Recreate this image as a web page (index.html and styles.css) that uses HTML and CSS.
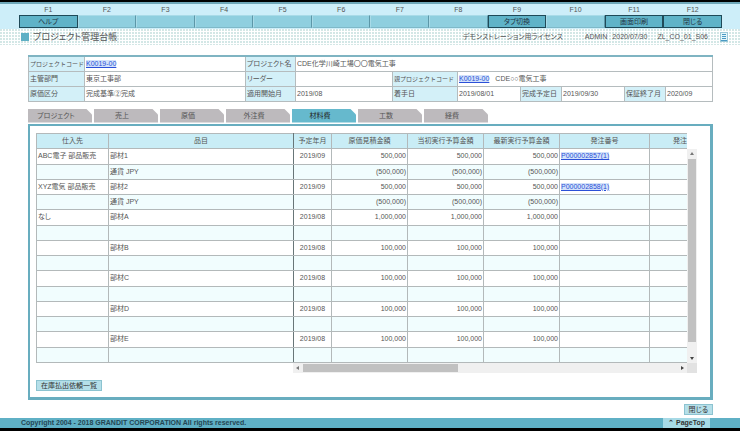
FILE: index.html
```html
<!DOCTYPE html>
<html lang="ja">
<head>
<meta charset="utf-8">
<title>プロジェクト管理台帳</title>
<link rel="stylesheet" href="styles.css">
</head>
<body>
<div class="page">
  <header>
    <div class="fn-bar">
      <div class="fn"><label for="f1">F1</label><button id="f1">ヘルプ</button></div>
      <div class="fn"><label for="f2">F2</label><button id="f2" disabled></button></div>
      <div class="fn"><label for="f3">F3</label><button id="f3" disabled></button></div>
      <div class="fn"><label for="f4">F4</label><button id="f4" disabled></button></div>
      <div class="fn"><label for="f5">F5</label><button id="f5" disabled></button></div>
      <div class="fn"><label for="f6">F6</label><button id="f6" disabled></button></div>
      <div class="fn"><label for="f7">F7</label><button id="f7" disabled></button></div>
      <div class="fn"><label for="f8">F8</label><button id="f8" disabled></button></div>
      <div class="fn"><label for="f9">F9</label><button id="f9">タブ切換</button></div>
      <div class="fn"><label for="f10">F10</label><button id="f10" disabled></button></div>
      <div class="fn"><label for="f11">F11</label><button id="f11">画面印刷</button></div>
      <div class="fn"><label for="f12">F12</label><button id="f12">閉じる</button></div>
    </div>
    <div class="title-bar">
      <span class="marker"></span>
      <h1>プロジェクト管理台帳</h1>
      <div class="session">
        <span class="license">デモンストレーション用ライセンス</span>
        <span class="user">ADMIN</span>
        <span class="date">2020/07/30</span>
        <span class="screen">ZL_CO_01_S06</span>
        <svg class="memo" viewBox="0 0 8 10"><rect x=".5" y=".5" width="7" height="9" fill="#e4f6fb" stroke="#9cc9d8"/><path d="M2 2.5h4M2 4.5h4M2 6.5h4" stroke="#4a9ac4"/><path d="M1 8.5h6" stroke="#4a9ac4"/></svg>
      </div>
    </div>
  </header>

  <main>
    <table class="info">
      <colgroup><col class="w56"><col class="w161"><col class="w50"><col class="w97"><col class="w65"><col class="w63"><col class="w41"><col class="w63"><col class="w41"><col></colgroup>
      <tr><th class="long">プロジェクトコード</th><td><a href="#">K0019-00</a></td><th>プロジェクト名</th><td colspan="7">CDE化学川崎工場〇〇電気工事</td></tr>
      <tr><th>主管部門</th><td>東京工事部</td><th>リーダー</th><td></td><th class="long">親プロジェクトコード</th><td colspan="5"><a href="#">K0019-00</a><span class="parent-name">CDE○○電気工事</span></td></tr>
      <tr><th>原価区分</th><td>完成基準②完成</td><th>適用開始月</th><td>2019/08</td><th>着手日</th><td>2019/08/01</td><th>完成予定日</th><td>2019/09/30</td><th>保証終了月</th><td>2020/09</td></tr>
    </table>

    <nav class="tabs">
      <button>プロジェクト</button><button>売上</button><button>原価</button><button>外注費</button><button class="active">材料費</button><button>工数</button><button>経費</button>
    </nav>

    <section class="panel">
      <div class="scroller">
        <div class="viewport">
          <table class="grid">
            <colgroup><col class="w72"><col class="w185"><col class="w38"><col class="w76"><col class="w76"><col class="w76"><col class="w90"><col class="w61"></colgroup>
            <thead><tr><th>仕入先</th><th>品目</th><th>予定年月</th><th>原価見積金額</th><th>当初実行予算金額</th><th>最新実行予算金額</th><th>発注番号</th><th>発注</th></tr></thead>
            <tbody>
              <tr><td>ABC電子 部品販売</td><td>部材1</td><td>2019/09</td><td>500,000</td><td>500,000</td><td>500,000</td><td><a href="#">P000002857(1)</a></td><td></td></tr>
              <tr><td></td><td>通貨 JPY</td><td></td><td>(500,000)</td><td>(500,000)</td><td>(500,000)</td><td></td><td></td></tr>
              <tr><td>XYZ電気 部品販売</td><td>部材2</td><td>2019/09</td><td>500,000</td><td>500,000</td><td>500,000</td><td><a href="#">P000002858(1)</a></td><td></td></tr>
              <tr><td></td><td>通貨 JPY</td><td></td><td>(500,000)</td><td>(500,000)</td><td>(500,000)</td><td></td><td></td></tr>
              <tr><td>なし</td><td>部材A</td><td>2019/08</td><td>1,000,000</td><td>1,000,000</td><td>1,000,000</td><td></td><td></td></tr>
              <tr><td></td><td></td><td></td><td></td><td></td><td></td><td></td><td></td></tr>
              <tr><td></td><td>部材B</td><td>2019/08</td><td>100,000</td><td>100,000</td><td>100,000</td><td></td><td></td></tr>
              <tr><td></td><td></td><td></td><td></td><td></td><td></td><td></td><td></td></tr>
              <tr><td></td><td>部材C</td><td>2019/08</td><td>100,000</td><td>100,000</td><td>100,000</td><td></td><td></td></tr>
              <tr><td></td><td></td><td></td><td></td><td></td><td></td><td></td><td></td></tr>
              <tr><td></td><td>部材D</td><td>2019/08</td><td>100,000</td><td>100,000</td><td>100,000</td><td></td><td></td></tr>
              <tr><td></td><td></td><td></td><td></td><td></td><td></td><td></td><td></td></tr>
              <tr><td></td><td>部材E</td><td>2019/08</td><td>100,000</td><td>100,000</td><td>100,000</td><td></td><td></td></tr>
              <tr><td></td><td></td><td></td><td></td><td></td><td></td><td></td><td></td></tr>
            </tbody>
          </table>
        </div>
        <div class="vbar"><i class="up"></i><i class="thumb"></i><i class="down"></i></div>
        <div class="hbar"><i class="left"></i><i class="thumb"></i><i class="right"></i></div>
        <div class="corner"></div>
      </div>
      <button class="action">在庫払出依頼一覧</button>
    </section>
    <div class="close-row"><button class="action">閉じる</button></div>
  </main>

  <footer><small>Copyright 2004 - 2018 GRANDIT CORPORATION All rights reserved.</small><a href="#">⌃ PageTop</a></footer>
</div>
</body>
</html>
```
FILE: styles.css
```css
* { box-sizing: border-box; }
body {
  margin: 0;
  padding-right: 10px;
  background: #fff;
  color: #555;
  font: 7px/10px "Liberation Sans", "Noto Sans CJK JP", sans-serif;
  font-feature-settings: "palt";
}
button {
  padding: 0;
  border: 0;
  border-radius: 0;
  color: inherit;
  font: inherit;
  font-feature-settings: inherit;
}
a { color: #2b50d8; }
td a { background: #d3e2fa; }
table { border-collapse: collapse; table-layout: fixed; width: 100%; }
th { font-weight: normal; }

/* Function key bar */
.fn-bar {
  display: grid;
  grid-template-columns: repeat(12, 1fr);
  padding: 1px 18px 1px 19px;
  border-top: 2px solid #000;
  background: #cdeef9;
  box-shadow: inset 0 2px #6fa7b8;
}
.fn { display: flex; flex-direction: column; text-align: center; }
.fn label { height: 12px; line-height: 14px; }
.fn button {
  height: 13px;
  border: 1px solid #1f4a58;
  background: #5fb3c8;
  line-height: 11px;
  color: #234;
}
.fn button:disabled {
  border-color: #a9dbe8 #5c97a8 #7fb9c8 #a9dbe8;
  background: #8fcfdf;
}

/* Title strip */
.title-bar {
  display: flex;
  align-items: center;
  height: 16px;
  padding: 0 12px 0 21px;
  background: radial-gradient(circle at 1px 1px, #d3e7e6 1px, transparent 1px) 0 0 / 3px 3px;
}
.marker { width: 8px; height: 8px; margin-right: 4px; background: #5fb0c5; }
h1 { margin: 0; font-size: 9px; font-weight: normal; }
.session { display: flex; align-items: center; margin-left: auto; }
.license { margin-right: 22px; }
.user { margin-right: 5px; }
.date { margin-right: 10px; }
.screen { margin-right: 12px; }
.memo { width: 8px; height: 10px; }

main { padding: 10px 27px 0 28px; }

/* Project summary */
.info { border: 1px solid #a8b4b6; border-top: 2px solid #7fb4c2; }
.info th, .info td {
  height: 15px;
  padding: 0 0 0 1px;
  border: 1px solid #b5bcbe;
  text-align: left;
  white-space: nowrap;
}
.info th { background: #d3f0f8; }
.info .long { font-size: 6px; font-feature-settings: normal; }
.parent-name { margin-left: 6px; }
.w38 { width: 38px; }
.w41 { width: 41px; }
.w50 { width: 50px; }
.w56 { width: 56px; }
.w61 { width: 61px; }
.w63 { width: 63px; }
.w65 { width: 65px; }
.w72 { width: 72px; }
.w76 { width: 76px; }
.w90 { width: 90px; }
.w97 { width: 97px; }
.w161 { width: 161px; }
.w185 { width: 185px; }

/* Tabs */
.tabs { display: flex; gap: 2px; margin-top: 7px; }
.tabs button {
  width: 64px;
  height: 14px;
  padding-right: 8px;
  background: #bdbabd;
  clip-path: polygon(0 0, 58px 0, 100% 6px, 100% 100%, 0 100%);
}
.tabs .active { background: #66b9cd; color: #222; }

.panel {
  margin-top: 1px;
  padding: 7px 13px 6px 6px;
  border: 2px solid #68adbf;
  border-width: 2px 3px 3px 2px;
}
.scroller {
  display: grid;
  grid-template-columns: 1fr 10px;
  grid-template-rows: 230px 10px;
}
.viewport { overflow: hidden; }
.grid { width: 674px; }
.grid th, .grid td {
  height: 15px;
  padding: 0 1px;
  border: 1px solid #b3b9ba;
  line-height: 10px;
  white-space: nowrap;
}
.grid th { background: #c9edf6; }
.grid tbody tr:nth-child(4n+1) td { height: 16px; }
.grid tr:nth-child(even) td { background: #f1fdfe; }
.grid td:nth-child(3) { text-align: center; }
.grid td:nth-child(n+4):nth-child(-n+6) { text-align: right; }
.grid tr > :nth-child(2) { border-right: 1px solid #687678; }

/* Scroll bars */
.vbar, .hbar { display: flex; align-items: center; background: #f0f0f0; }
.vbar { flex-direction: column; margin-top: 16px; padding: 3px 0; }
.hbar { margin-left: 257px; padding: 0 3px; }
.vbar .thumb { width: 8px; height: 183px; margin: 4px 0 auto; background: #c1c1c1; }
.hbar .thumb { width: 155px; height: 8px; margin: 0 auto 0 4px; background: #c1c1c1; }
.corner { background: #e2e2e2; }
.up, .down { border: 2px solid transparent; }
.up { border-top: 0; border-bottom: 3px solid #777; }
.down { border-bottom: 0; border-top: 3px solid #444; }
.left, .right { border: 2px solid transparent; }
.left { border-left: 0; border-right: 3px solid #777; }
.right { border-right: 0; border-left: 3px solid #444; }

.action {
  height: 11px;
  padding: 0 4px;
  border: 1px solid #8cc3d0;
  background: #b5dfe9;
  color: #333;
  line-height: 9px;
}
.panel .action { display: block; margin-top: 7px; }
.close-row { display: flex; justify-content: flex-end; margin: 4px 0 3px; }

footer {
  display: flex;
  justify-content: space-between;
  height: 13px;
  padding: 0 30px 0 21px;
  border-bottom: 3px solid #000;
  background: #5fb0c5;
  color: #244552;
  font-weight: bold;
}
footer small { font-size: 7px; }
footer a { padding: 0 5px; background: #a7dae6; color: #333; text-decoration: none; }
```
